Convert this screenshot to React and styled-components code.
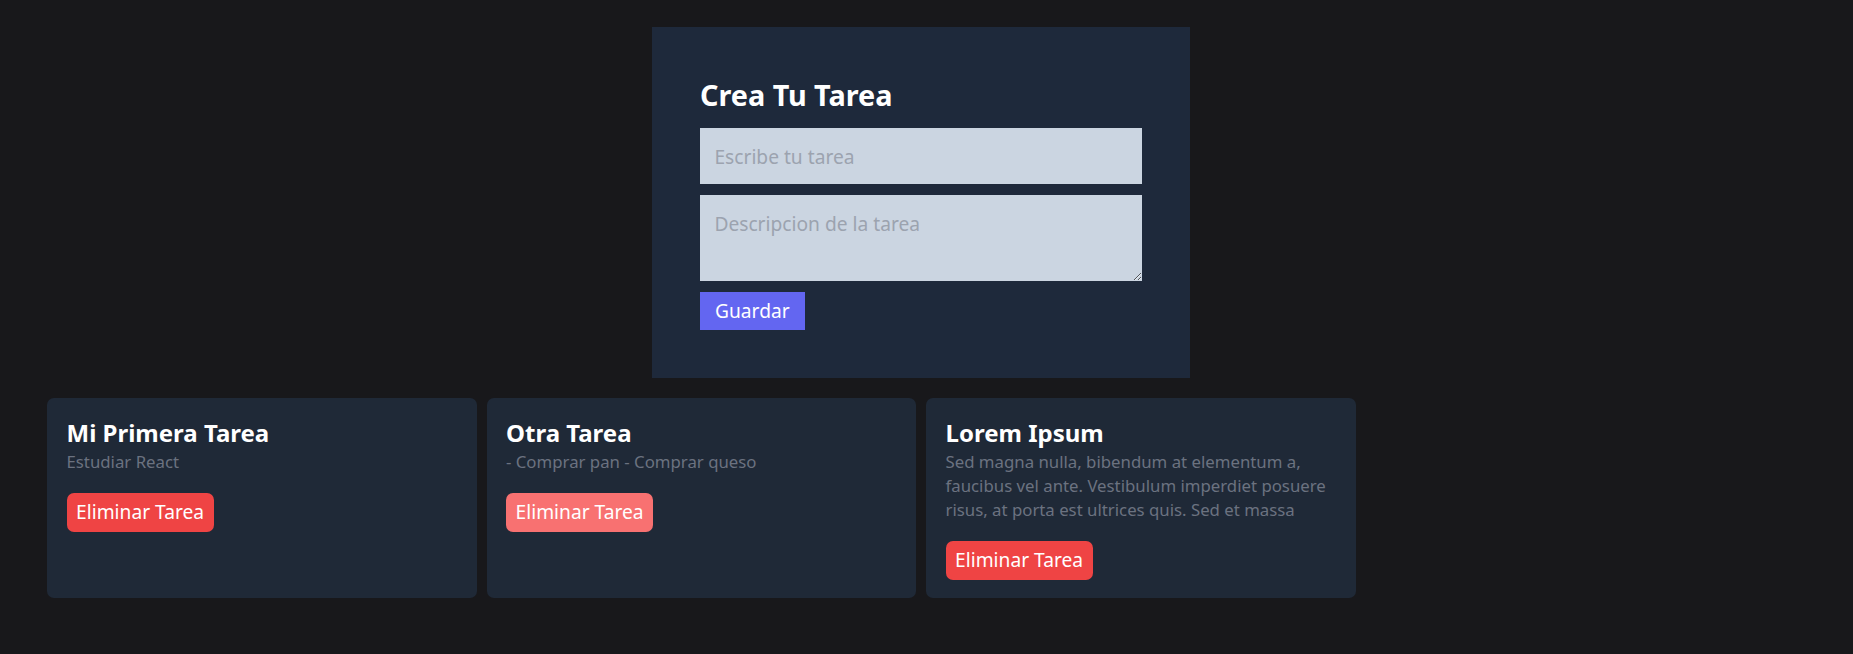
import React from 'react';
import styled, { createGlobalStyle } from 'styled-components';

const tasks = [
  { id: 1, title: 'Mi Primera Tarea', description: 'Estudiar React' },
  { id: 2, title: 'Otra Tarea', description: '- Comprar pan - Comprar queso', hovered: true },
  {
    id: 3,
    title: 'Lorem Ipsum',
    description:
      'Sed magna nulla, bibendum at elementum a, faucibus vel ante. Vestibulum imperdiet posuere risus, at porta est ultrices quis. Sed et massa',
  },
];

const App = () => {
  return (
    <>
      <GlobalStyle />
      <Page>
        <FormPanel onSubmit={(e) => e.preventDefault()}>
          <FormTitle>Crea Tu Tarea</FormTitle>
          <TextInput placeholder="Escribe tu tarea" />
          <TextArea placeholder="Descripcion de la tarea" />
          <SaveButton>Guardar</SaveButton>
        </FormPanel>

        <TaskGrid>
          {tasks.map(({ id, title, description, hovered }) => (
            <TaskCard key={id}>
              <TaskTitle>{title}</TaskTitle>
              <TaskDescription>{description}</TaskDescription>
              <DeleteButton $hovered={hovered}>Eliminar Tarea</DeleteButton>
            </TaskCard>
          ))}
        </TaskGrid>
      </Page>
    </>
  );
};

const GlobalStyle = createGlobalStyle`
  * {
    box-sizing: border-box;
  }

  html,
  body {
    margin: 0;
    min-height: 100%;
    background-color: #18181b;
  }

  body {
    font-family: 'Noto Sans', 'Open Sans', sans-serif;
    color: #ffffff;
  }
`;

const Page = styled.main`
  min-height: 654px;
  padding: 27px 58px 0 47px;
`;

const FormPanel = styled.form`
  display: flex;
  flex-direction: column;
  align-items: flex-start;
  width: 538px;
  margin: 0 auto;
  padding: 48px;
  background-color: #1e293b;
`;

const FormTitle = styled.h1`
  margin: 1px 0 13.4px;
  font-size: 28.8px;
  line-height: 38.4px;
  font-weight: 700;
  color: #ffffff;
`;

const fieldStyle = `
  width: 100%;
  padding: 0 14.4px;
  border: none;
  outline: none;
  border-radius: 0;
  background-color: #cbd5e1;
  font-family: 'Noto Sans', sans-serif;
  font-size: 19.2px;
  color: #1e293b;

  &::placeholder {
    color: #9ca3af;
  }
`;

const TextInput = styled.input`
  ${fieldStyle}
  height: 56.5px;
  margin-bottom: 11px;
`;

const TextArea = styled.textarea`
  ${fieldStyle}
  display: block;
  height: 85.5px;
  padding-top: 14.4px;
  line-height: 28px;
  margin-bottom: 11px;
`;

const SaveButton = styled.button`
  height: 38.4px;
  padding: 0 15px;
  border: none;
  background-color: #6366f1;
  color: #ffffff;
  font-family: 'Noto Sans', sans-serif;
  font-size: 19.2px;
  line-height: 38.4px;
  cursor: pointer;
`;

const TaskGrid = styled.section`
  display: grid;
  grid-template-columns: repeat(4, 1fr);
  gap: 10px;
  margin-top: 20px;
`;

const TaskCard = styled.article`
  padding: 17.5px 19.5px 18.5px;
  border-radius: 7px;
  background-color: #1f2937;
`;

const TaskTitle = styled.h2`
  margin: 0 0 1px;
  font-size: 24px;
  line-height: 33.6px;
  font-weight: 700;
  color: #ffffff;
`;

const TaskDescription = styled.p`
  margin: 0 0 19.2px;
  font-size: 16.8px;
  line-height: 24px;
  color: #6b7280;
`;

const DeleteButton = styled.button`
  height: 38.4px;
  padding: 0 9.6px;
  border: none;
  border-radius: 7px;
  background-color: ${({ $hovered }) => ($hovered ? '#f87171' : '#ef4444')};
  color: #ffffff;
  font-family: 'Noto Sans', sans-serif;
  font-size: 19.2px;
  line-height: 38.4px;
  cursor: pointer;
`;

export default App;
